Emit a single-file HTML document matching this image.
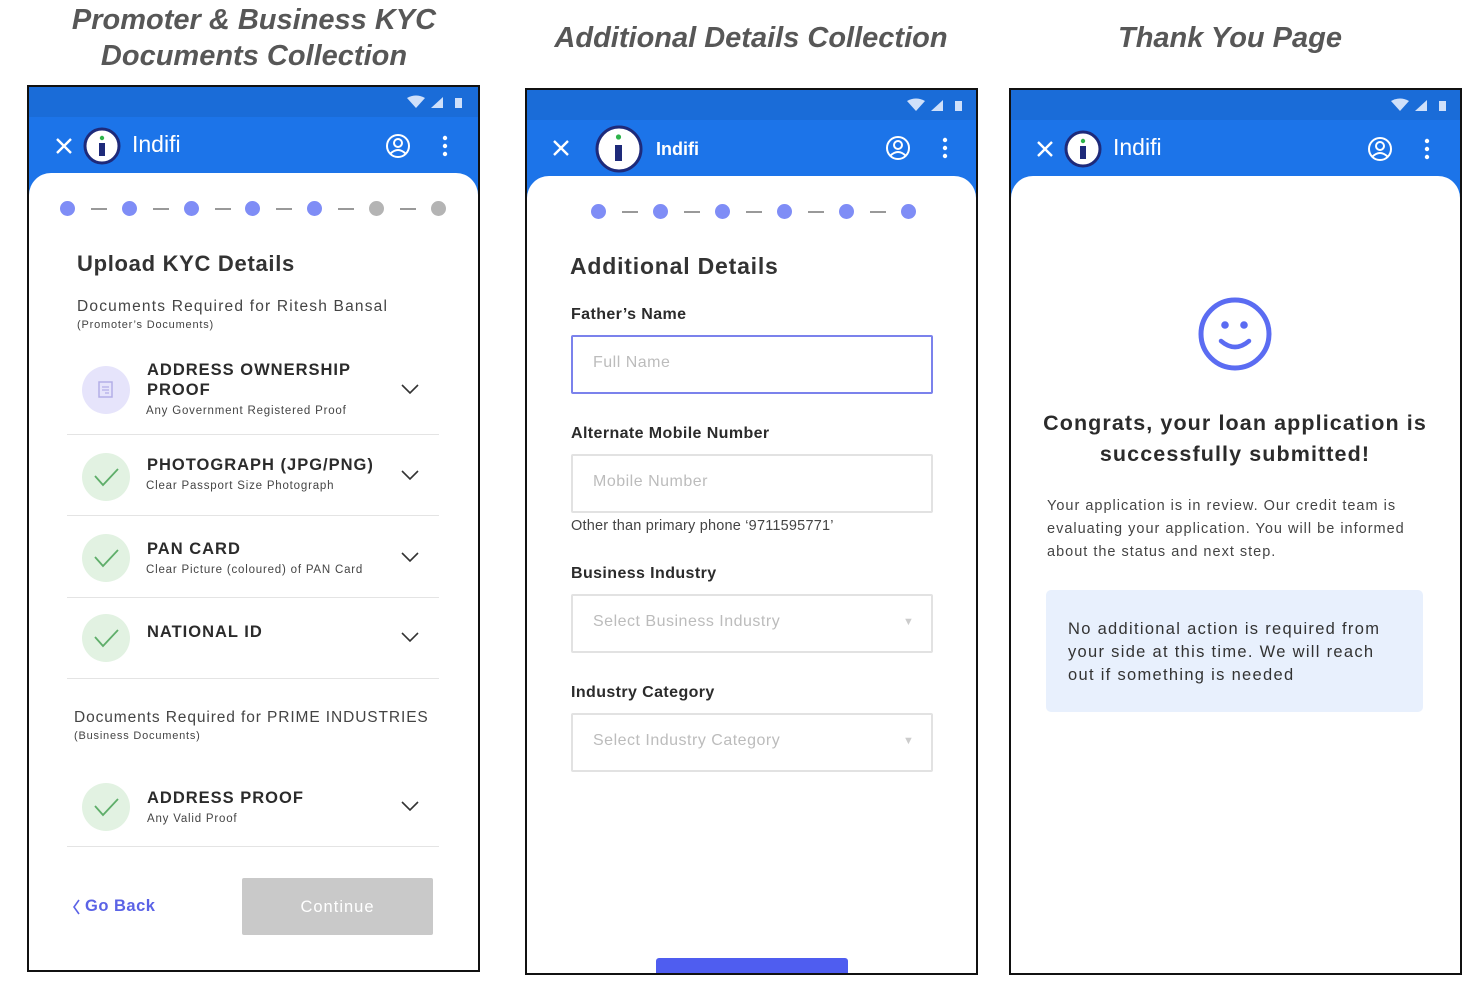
<!DOCTYPE html>
<html><head><meta charset="utf-8"><style>
*{margin:0;padding:0;box-sizing:border-box}
body{width:1482px;height:989px;background:#fff;position:relative;overflow:hidden;font-family:"Liberation Sans",sans-serif;color:#333}
.a{position:absolute;white-space:nowrap}
.ttl{font-style:italic;font-weight:bold;color:#575757;font-size:29px;text-align:center;line-height:36px}
.ph{position:absolute;border:2px solid #111;background:#1c74e9;overflow:hidden}
.sb{position:absolute;left:0;top:0;right:0;height:30px;background:#1a6cd8}
.card{position:absolute;left:0;right:0;top:86px;bottom:0;background:#fff;border-radius:22px 22px 0 0}
.dot{position:absolute;width:15px;height:15px;border-radius:50%;background:#7f8df6}
.g{background:#b4b4b4}
.dash{position:absolute;width:16px;height:2px;background:#999}
.circ{position:absolute;width:48px;height:48px;border-radius:50%;background:#e2f2e2}
.it{font-size:16.5px;font-weight:bold;color:#2b2b2b;letter-spacing:1px}
.sub{font-size:11.5px;color:#444;letter-spacing:.8px}
.sep{position:absolute;left:67px;width:372px;height:1px;background:#e4e4e4}
.lbl{font-size:16px;font-weight:bold;color:#2b2b2b;letter-spacing:.4px}
.inp{position:absolute;left:571px;width:362px;height:59px;border:2px solid #e2e2e2;border-radius:2px}
.ph2{position:absolute;left:20px;top:17px;font-size:16px;color:#bcbcbc;letter-spacing:.5px}
</style></head><body>

<div class="a ttl" style="left:0;width:508px;top:2px">Promoter &amp; Business KYC<br>Documents Collection</div>
<div class="a ttl" style="left:500px;width:502px;top:20px">Additional Details Collection</div>
<div class="a ttl" style="left:980px;width:500px;top:20px">Thank You Page</div>

<!-- PHONE 1 -->
<div class="ph" style="left:27px;top:85px;width:453px;height:887px">
 <div class="sb"></div>
 <svg class="a" style="left:376px;top:8px" width="70" height="16"><path d="M2 3 Q11 -2 20 3 L11 13Z" fill="#cfe0fa"/><path d="M26 13 L38 2 L38 13Z" fill="#cfe0fa"/><rect x="50" y="3" width="7" height="10" fill="#cfe0fa"/></svg>
 <svg class="a" style="left:24px;top:37px" width="420" height="46">
  <path d="M4 15 L18 29 M18 15 L4 29" stroke="#fff" stroke-width="2.4"/>
  <circle cx="49" cy="22" r="17" fill="#fff" stroke="#1e2a7a" stroke-width="3"/>
  <rect x="46" y="19" width="6" height="13" fill="#1e2a7a"/><circle cx="49" cy="14" r="2.2" fill="#2db34a"/>
  <circle cx="345" cy="22" r="11" fill="none" stroke="#fff" stroke-width="2"/><circle cx="345" cy="19" r="4" fill="none" stroke="#fff" stroke-width="2"/><path d="M337 30 Q345 22 353 30" fill="none" stroke="#fff" stroke-width="2"/>
  <circle cx="392" cy="14" r="2.2" fill="#fff"/><circle cx="392" cy="22" r="2.2" fill="#fff"/><circle cx="392" cy="30" r="2.2" fill="#fff"/>
 </svg>
 <div class="a" style="left:103px;top:44px;font-size:23px;color:#fff">Indifi</div>
 <div class="card"></div>
</div>
<div class="dot" style="left:60px;top:201px"></div><div class="dash" style="left:91px;top:208px"></div>
<div class="dot" style="left:122px;top:201px"></div><div class="dash" style="left:153px;top:208px"></div>
<div class="dot" style="left:184px;top:201px"></div><div class="dash" style="left:215px;top:208px"></div>
<div class="dot" style="left:245px;top:201px"></div><div class="dash" style="left:276px;top:208px"></div>
<div class="dot" style="left:307px;top:201px"></div><div class="dash" style="left:338px;top:208px"></div>
<div class="dot g" style="left:369px;top:201px"></div><div class="dash" style="left:400px;top:208px"></div>
<div class="dot g" style="left:431px;top:201px"></div>
<div class="a" style="left:77px;top:251px;font-size:22px;font-weight:bold;color:#333;letter-spacing:.7px">Upload KYC Details</div>
<div class="a" style="left:77px;top:298px;font-size:15.5px;color:#444;letter-spacing:1.2px">Documents Required for Ritesh Bansal</div>
<div class="a sub" style="left:77px;top:319px;font-size:11px">(Promoter’s Documents)</div>

<div class="circ" style="left:82px;top:366px;background:#e6e4fb"></div>
<svg class="a" style="left:97px;top:380px" width="18" height="20"><rect x="2" y="2" width="13" height="15" fill="none" stroke="#b3aee8" stroke-width="1.5"/><path d="M5 7h7M5 10h7M8 13h4" stroke="#b3aee8" stroke-width="1.3"/></svg>
<div class="a it" style="left:147px;top:360px;line-height:20px">ADDRESS OWNERSHIP<br>PROOF</div>
<div class="a sub" style="left:146px;top:405px">Any Government Registered Proof</div>
<div class="sep" style="top:434px"></div>

<div class="circ" style="left:82px;top:453px"></div>
<div class="a it" style="left:147px;top:456px">PHOTOGRAPH (JPG/PNG)</div>
<div class="a sub" style="left:146px;top:480px">Clear Passport Size Photograph</div>
<div class="sep" style="top:515px"></div>

<div class="circ" style="left:82px;top:534px"></div>
<div class="a it" style="left:147px;top:540px">PAN CARD</div>
<div class="a sub" style="left:146px;top:564px">Clear Picture (coloured) of PAN Card</div>
<div class="sep" style="top:597px"></div>

<div class="circ" style="left:82px;top:614px"></div>
<div class="a it" style="left:147px;top:623px">NATIONAL ID</div>
<div class="sep" style="top:678px"></div>

<div class="a" style="left:74px;top:709px;font-size:15.5px;color:#444;letter-spacing:.9px">Documents Required for PRIME INDUSTRIES</div>
<div class="a sub" style="left:74px;top:730px;font-size:11px">(Business Documents)</div>

<div class="circ" style="left:82px;top:783px"></div>
<div class="a it" style="left:147px;top:789px">ADDRESS PROOF</div>
<div class="a sub" style="left:147px;top:813px">Any Valid Proof</div>
<div class="sep" style="top:846px"></div>

<svg class="a" style="left:0;top:0" width="480" height="989">
 <g fill="none" stroke="#5fae6a" stroke-width="1.8"><path d="M95 476 L103 485 L118 469"/><path d="M95 557 L103 566 L118 550"/><path d="M95 637 L103 646 L118 630"/><path d="M95 806 L103 815 L118 799"/></g>
 <g fill="none" stroke="#333" stroke-width="1.6"><path d="M402 385 L410 393 L418 385"/><path d="M402 471 L410 479 L418 471"/><path d="M402 553 L410 561 L418 553"/><path d="M402 633 L410 641 L418 633"/><path d="M402 802 L410 810 L418 802"/></g>
 <path d="M79 900 L74 907 L79 914" fill="none" stroke="#5b63e6" stroke-width="1.6"/>
</svg>
<div class="a" style="left:85px;top:897px;font-size:16.5px;color:#5b63e6;font-weight:bold;letter-spacing:.5px">Go Back</div>
<div class="a" style="left:242px;top:878px;width:191px;height:57px;background:#c9c9c9;border-radius:2px;color:#fff;font-size:16.5px;text-align:center;line-height:59px;letter-spacing:1px">Continue</div>

<!-- PHONE 2 -->
<div class="ph" style="left:525px;top:88px;width:453px;height:887px">
 <div class="sb"></div>
 <svg class="a" style="left:378px;top:8px" width="70" height="16"><path d="M2 3 Q11 -2 20 3 L11 13Z" fill="#cfe0fa"/><path d="M26 13 L38 2 L38 13Z" fill="#cfe0fa"/><rect x="50" y="3" width="7" height="10" fill="#cfe0fa"/></svg>
 <svg class="a" style="left:24px;top:31px" width="420" height="56">
  <path d="M3 20 L17 34 M17 20 L3 34" stroke="#fff" stroke-width="2.4"/>
  <circle cx="68" cy="28" r="22" fill="#fff" stroke="#1e2a7a" stroke-width="3"/>
  <rect x="64" y="24" width="7" height="16" fill="#1e2a7a"/><circle cx="67.5" cy="16" r="2.6" fill="#2db34a"/>
  <circle cx="347" cy="27" r="11" fill="none" stroke="#fff" stroke-width="2"/><circle cx="347" cy="24" r="4" fill="none" stroke="#fff" stroke-width="2"/><path d="M339 35 Q347 27 355 35" fill="none" stroke="#fff" stroke-width="2"/>
  <circle cx="394" cy="19" r="2.2" fill="#fff"/><circle cx="394" cy="27" r="2.2" fill="#fff"/><circle cx="394" cy="35" r="2.2" fill="#fff"/>
 </svg>
 <div class="a" style="left:129px;top:49px;font-size:18px;color:#fff;font-weight:bold">Indifi</div>
 <div class="card"></div>
</div>
<div class="dot" style="left:591px;top:204px"></div><div class="dash" style="left:622px;top:211px"></div>
<div class="dot" style="left:653px;top:204px"></div><div class="dash" style="left:684px;top:211px"></div>
<div class="dot" style="left:715px;top:204px"></div><div class="dash" style="left:746px;top:211px"></div>
<div class="dot" style="left:777px;top:204px"></div><div class="dash" style="left:808px;top:211px"></div>
<div class="dot" style="left:839px;top:204px"></div><div class="dash" style="left:870px;top:211px"></div>
<div class="dot" style="left:901px;top:204px"></div>
<div class="a" style="left:570px;top:253px;font-size:23px;font-weight:bold;color:#333;letter-spacing:.8px">Additional Details</div>
<div class="a lbl" style="left:571px;top:306px">Father’s Name</div>
<div class="inp" style="top:335px;border-color:#7b82ec"><div class="ph2">Full Name</div></div>
<div class="a lbl" style="left:571px;top:425px">Alternate Mobile Number</div>
<div class="inp" style="top:454px"><div class="ph2">Mobile Number</div></div>
<div class="a" style="left:571px;top:518px;font-size:14.5px;color:#444;letter-spacing:.2px">Other than primary phone ‘9711595771’</div>
<div class="a lbl" style="left:571px;top:565px">Business Industry</div>
<div class="inp" style="top:594px"><div class="ph2">Select Business Industry</div><div class="a" style="left:330px;top:20px;font-size:11px;color:#ccc">▼</div></div>
<div class="a lbl" style="left:571px;top:684px">Industry Category</div>
<div class="inp" style="top:713px"><div class="ph2">Select Industry Category</div><div class="a" style="left:330px;top:20px;font-size:11px;color:#ccc">▼</div></div>
<div class="a" style="left:656px;top:958px;width:192px;height:15px;background:#4f5df0;border-radius:3px 3px 0 0"></div>

<!-- PHONE 3 -->
<div class="ph" style="left:1009px;top:88px;width:453px;height:887px">
 <div class="sb"></div>
 <svg class="a" style="left:378px;top:8px" width="70" height="16"><path d="M2 3 Q11 -2 20 3 L11 13Z" fill="#cfe0fa"/><path d="M26 13 L38 2 L38 13Z" fill="#cfe0fa"/><rect x="50" y="3" width="7" height="10" fill="#cfe0fa"/></svg>
 <svg class="a" style="left:24px;top:37px" width="420" height="46">
  <path d="M3 15 L17 29 M17 15 L3 29" stroke="#fff" stroke-width="2.4"/>
  <circle cx="48" cy="22" r="17" fill="#fff" stroke="#1e2a7a" stroke-width="3"/>
  <rect x="45" y="19" width="6" height="13" fill="#1e2a7a"/><circle cx="48" cy="14" r="2.2" fill="#2db34a"/>
  <circle cx="345" cy="22" r="11" fill="none" stroke="#fff" stroke-width="2"/><circle cx="345" cy="19" r="4" fill="none" stroke="#fff" stroke-width="2"/><path d="M337 30 Q345 22 353 30" fill="none" stroke="#fff" stroke-width="2"/>
  <circle cx="392" cy="14" r="2.2" fill="#fff"/><circle cx="392" cy="22" r="2.2" fill="#fff"/><circle cx="392" cy="30" r="2.2" fill="#fff"/>
 </svg>
 <div class="a" style="left:102px;top:44px;font-size:23px;color:#fff">Indifi</div>
 <div class="card"></div>
</div>
<svg class="a" style="left:1195px;top:295px" width="80" height="80">
 <circle cx="40" cy="39" r="34" fill="none" stroke="#5b6cf2" stroke-width="5"/>
 <circle cx="30" cy="30" r="3.8" fill="#5b6cf2"/><circle cx="49" cy="30" r="3.8" fill="#5b6cf2"/>
 <path d="M26 46 Q40 58 54 46" fill="none" stroke="#5b6cf2" stroke-width="4.5" stroke-linecap="round"/>
</svg>
<div class="a" style="left:1010px;width:450px;top:408px;text-align:center;font-size:21.5px;font-weight:bold;color:#2b2b2b;line-height:31px;letter-spacing:1.1px">Congrats, your loan application is<br>successfully submitted!</div>
<div class="a" style="left:1047px;top:495px;font-size:14.5px;color:#444;line-height:23px;letter-spacing:1px">Your application is in review. Our credit team is<br>evaluating your application. You will be informed<br>about the status and next step.</div>
<div class="a" style="left:1046px;top:590px;width:377px;height:122px;background:#e8f0fd;border-radius:5px"></div>
<div class="a" style="left:1068px;top:618px;font-size:16.5px;color:#333;line-height:23px;letter-spacing:1.3px">No additional action is required from<br>your side at this time. We will reach<br>out if something is needed</div>
</body></html>
